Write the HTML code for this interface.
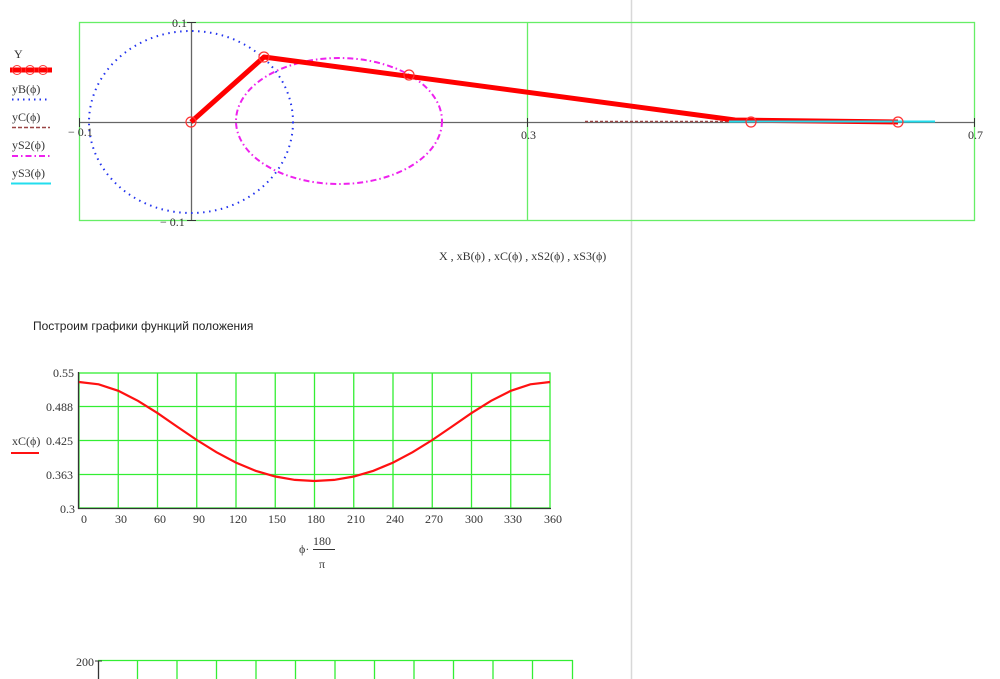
<!DOCTYPE html>
<html><head><meta charset="utf-8"><style>
html,body{margin:0;padding:0;background:#fff;width:1000px;height:679px;overflow:hidden}
svg{display:block}
.s{font-family:"Liberation Serif",serif;font-size:12px;fill:#333}
.a{font-family:"Liberation Sans",sans-serif;font-size:12px;fill:#222}
</style></head><body>
<svg width="1000" height="679" viewBox="0 0 1000 679" xmlns="http://www.w3.org/2000/svg">
<!-- separator -->
<line x1="631.5" y1="0" x2="631.5" y2="679" stroke="#d8d8d8" stroke-width="1.5"/>

<!-- TOP PLOT -->
<rect x="79.5" y="22.5" width="895" height="198" fill="none" stroke="#66ee66" stroke-width="1.3"/>
<line x1="527.5" y1="22" x2="527.5" y2="220" stroke="#66ee66" stroke-width="1.3"/>
<line x1="79" y1="122.5" x2="975" y2="122.5" stroke="#666" stroke-width="1.3"/>
<line x1="191.5" y1="22" x2="191.5" y2="220" stroke="#666" stroke-width="1.3"/>
<line x1="79.5" y1="118" x2="79.5" y2="127" stroke="#333"/>
<line x1="527.5" y1="118" x2="527.5" y2="127" stroke="#333"/>
<line x1="974.5" y1="118" x2="974.5" y2="127" stroke="#333"/>
<line x1="187" y1="22.5" x2="196" y2="22.5" stroke="#333"/>
<line x1="187" y1="220.5" x2="196" y2="220.5" stroke="#333"/>
<ellipse cx="191" cy="122" rx="102" ry="91" fill="none" stroke="#2233ee" stroke-width="2" stroke-dasharray="1.5 4.5"/>
<ellipse cx="339" cy="121" rx="103" ry="63" fill="none" stroke="#ee22ee" stroke-width="2" stroke-dasharray="6 3 1.5 3"/>
<line x1="585" y1="121.5" x2="730" y2="121.5" stroke="#994444" stroke-width="1.5" stroke-dasharray="3 2"/>
<polyline points="191,122 264,57 735,120 898,122" fill="none" stroke="#ff0000" stroke-width="5" stroke-linejoin="round"/>
<line x1="729" y1="121.5" x2="935" y2="121.5" stroke="#22ddee" stroke-width="2"/>
<g fill="none" stroke="#ff3333" stroke-width="1.2">
<circle cx="191" cy="122" r="5"/><circle cx="264" cy="57" r="5"/><circle cx="409" cy="75" r="5"/><circle cx="751" cy="122" r="5"/><circle cx="898" cy="122" r="5"/>
</g>
<text class="s" x="172" y="27">0.1</text>
<text class="s" x="160" y="226">− 0.1</text>
<text class="s" x="68" y="136">− 0.1</text>
<text class="s" x="521" y="139">0.3</text>
<text class="s" x="968" y="139">0.7</text>
<text class="s" x="439" y="260">X , xB(ϕ) , xC(ϕ) , xS2(ϕ) , xS3(ϕ)</text>
<!-- legend -->
<text class="s" x="14" y="58">Y</text>
<line x1="10" y1="70" x2="52" y2="70" stroke="#ff0000" stroke-width="5"/>
<g fill="none" stroke="#ff3333" stroke-width="1"><circle cx="17" cy="70" r="4.5"/><circle cx="30" cy="70" r="4.5"/><circle cx="43" cy="70" r="4.5"/></g>
<text class="s" x="12" y="93">yB(ϕ)</text>
<line x1="12" y1="99.5" x2="47" y2="99.5" stroke="#2233ee" stroke-width="2" stroke-dasharray="1.5 4"/>
<text class="s" x="12" y="121">yC(ϕ)</text>
<line x1="12" y1="127.5" x2="50" y2="127.5" stroke="#994444" stroke-width="1.5" stroke-dasharray="4 2"/>
<text class="s" x="12" y="149">yS2(ϕ)</text>
<line x1="12" y1="156" x2="50" y2="156" stroke="#ee22ee" stroke-width="2" stroke-dasharray="6 3 1.5 3"/>
<text class="s" x="12" y="177">yS3(ϕ)</text>
<line x1="11" y1="183.5" x2="51" y2="183.5" stroke="#22ddee" stroke-width="2"/>

<text class="a" x="33" y="330">Построим графики функций положения</text>

<!-- MIDDLE PLOT -->
<g stroke="#33ee33" stroke-width="1.3" fill="none">
<rect x="79" y="373" width="471" height="135"/>
<line x1="79" y1="406.5" x2="550" y2="406.5"/><line x1="79" y1="440.5" x2="550" y2="440.5"/><line x1="79" y1="474.5" x2="550" y2="474.5"/>
<line x1="118.25" y1="373" x2="118.25" y2="508"/><line x1="157.5" y1="373" x2="157.5" y2="508"/><line x1="196.75" y1="373" x2="196.75" y2="508"/><line x1="236" y1="373" x2="236" y2="508"/><line x1="275.25" y1="373" x2="275.25" y2="508"/><line x1="314.5" y1="373" x2="314.5" y2="508"/><line x1="353.75" y1="373" x2="353.75" y2="508"/><line x1="393" y1="373" x2="393" y2="508"/><line x1="432.25" y1="373" x2="432.25" y2="508"/><line x1="471.5" y1="373" x2="471.5" y2="508"/><line x1="510.75" y1="373" x2="510.75" y2="508"/>
</g>
<line x1="78.5" y1="372" x2="78.5" y2="509" stroke="#333" stroke-width="1.3"/>
<line x1="78" y1="508.5" x2="551" y2="508.5" stroke="#333" stroke-width="1.3"/>
<polyline fill="none" stroke="#ff1111" stroke-width="2.2" points="79,382 98.6,384.3 118.3,390.8 137.9,400.8 157.5,413.1 177.1,426.6 196.8,440 216.4,452.2 236,462.6 255.6,470.8 275.3,476.5 294.9,479.9 314.5,481 334.1,479.9 353.8,476.5 373.4,470.8 393,462.6 412.6,452.2 432.3,440 451.9,426.6 471.5,413.1 491.1,400.8 510.8,390.8 530.4,384.3 550,382"/>
<g class="s">
<text class="s" x="53" y="377">0.55</text>
<text class="s" x="46" y="411">0.488</text>
<text class="s" x="46" y="445">0.425</text>
<text class="s" x="46" y="479">0.363</text>
<text class="s" x="60" y="513">0.3</text>
<text class="s" x="12" y="445">xC(ϕ)</text>
</g>
<line x1="11" y1="453" x2="39" y2="453" stroke="#ff1111" stroke-width="2"/>
<g class="s" text-anchor="middle">
<text class="s" x="84" y="523">0</text><text class="s" x="121" y="523">30</text><text class="s" x="160" y="523">60</text><text class="s" x="199" y="523">90</text><text class="s" x="238" y="523">120</text><text class="s" x="277" y="523">150</text><text class="s" x="316" y="523">180</text><text class="s" x="356" y="523">210</text><text class="s" x="395" y="523">240</text><text class="s" x="434" y="523">270</text><text class="s" x="474" y="523">300</text><text class="s" x="513" y="523">330</text><text class="s" x="553" y="523">360</text>
</g>
<text class="s" x="299" y="553">ϕ·</text>
<text class="s" x="313" y="545">180</text>
<line x1="313" y1="549.5" x2="335" y2="549.5" stroke="#333"/>
<text class="s" x="319" y="568">π</text>

<!-- BOTTOM PLOT -->
<g stroke="#33ee33" stroke-width="1.3" fill="none">
<line x1="98" y1="660.5" x2="573" y2="660.5"/>
<line x1="137.5" y1="660" x2="137.5" y2="679"/><line x1="177" y1="660" x2="177" y2="679"/><line x1="216.5" y1="660" x2="216.5" y2="679"/><line x1="256" y1="660" x2="256" y2="679"/><line x1="295.5" y1="660" x2="295.5" y2="679"/><line x1="335" y1="660" x2="335" y2="679"/><line x1="374.5" y1="660" x2="374.5" y2="679"/><line x1="414" y1="660" x2="414" y2="679"/><line x1="453.5" y1="660" x2="453.5" y2="679"/><line x1="493" y1="660" x2="493" y2="679"/><line x1="532.5" y1="660" x2="532.5" y2="679"/><line x1="572.5" y1="660" x2="572.5" y2="679"/>
</g>
<line x1="98.5" y1="661" x2="98.5" y2="679" stroke="#333" stroke-width="1.3"/>
<line x1="95" y1="661" x2="102" y2="661" stroke="#333"/>
<text class="s" x="76" y="666">200</text>
</svg>
</body></html>
